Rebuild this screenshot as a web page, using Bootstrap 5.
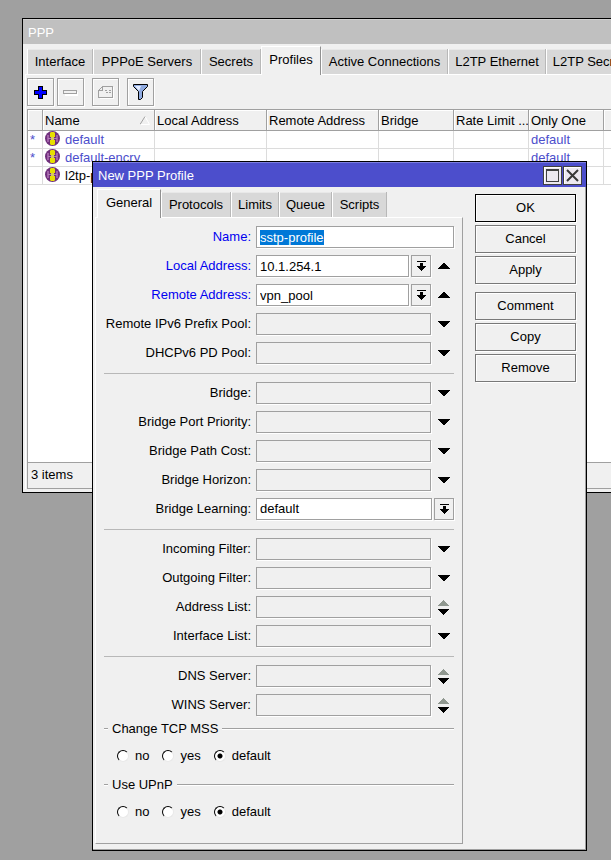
<!DOCTYPE html>
<html lang="en">
<head>
<meta charset="utf-8">
<meta name="viewport" content="width=device-width, initial-scale=1">
<title>PPP</title>
<link rel="stylesheet" href="https://cdn.jsdelivr.net/npm/bootstrap@5.3.0/dist/css/bootstrap.min.css">
<style>
body { background: #a0a0a0; color: #000; font: 13px/18px "Liberation Sans", Arial, sans-serif; }
button, input, select { font: inherit; color: inherit; }
.win { background: #f0f0f0; border: 1px solid #000; }
.win-ppp { left: 22px; right: -20px; top: 18px; height: 475px; padding-bottom: 3px; }
.win-dlg { left: 92px; top: 161px; width: 495px; padding-bottom: 6px; box-shadow: inset -1px -1px #a0a0a0; }
.win-title { height: 25px; line-height: 20px; background: #c0c0c0; color: #fff; padding: 4px 4px 0 5px; box-shadow: inset 0 1px #d0d0d0; }
.win-dlg .win-title { background: #4c4ecc; box-shadow: inset 0 1px #7c7ee0; }
.win-btns { gap: 1px; }
.tbtn { width: 19px; height: 19px; background: #ece8f0; border: 1px solid #404040; box-shadow: inset 1px 1px #fff; }

.tabs { margin-left: 4px; height: 30px; }
.tabs button { height: 25px; padding: 0; border: 0; border-right: 1px solid #b8b8b8; border-left: 1px solid #fff; background: #d8d8d8; white-space: nowrap; flex: none; box-shadow: inset 0 1px #e8e8e8; }
.tabs button.on { height: 29px; padding-bottom: 2px; background: #f0f0f0; border-right-color: #909090; border-top: 1px solid #fff; margin-bottom: -1px; position: relative; box-shadow: none; }
.t60 { width: 60px; } .t66 { width: 66px; } .t108 { width: 108px; } .t127 { width: 127px; } .t98 { width: 98px; } .t92 { width: 92px; }
.t64 { width: 64px; } .t70 { width: 70px; } .t48 { width: 48px; } .t53 { width: 53px; } .t55 { width: 55px; }

.sheet { margin-left: 2px; border-top: 1px solid #fff; border-left: 1px solid #fff; }
.tools { margin: 3px 0 3px 1px; }
.tool { width: 27px; height: 28px; border: 1px solid #a0a0a0; background: #f0f0f0; box-shadow: inset 1px 1px #fff, 1px 1px #fff; }
.tool + .tool { margin-left: 8px; }
.tool:nth-child(2) { margin-left: 3px; }
.grid-box { margin-left: 1px; border: 1px solid #a0a0a0; background: #fff; }
.grid-box table { width: 606px; table-layout: fixed; border-collapse: separate; border-spacing: 0; }
.grid-box th { height: 21px; background: #f0f0f0; font-weight: 400; border-right: 1px solid #a0a0a0; border-bottom: 1px solid #a0a0a0; padding: 1px 0 0 2px; white-space: nowrap; overflow: hidden; box-shadow: inset 1px 1px #fff; }
.grid-box td { height: 18px; line-height: 17px; border-right: 1px solid #dcdcdc; border-bottom: 1px solid #dcdcdc; padding: 0 0 0 2px; white-space: nowrap; overflow: hidden; }
.grid-box .c-flag { width: 15px; } .grid-box .c-wide { width: 112px; } .grid-box .c-mid { width: 75px; }
.sys { color: #4c4ecc; }
.status { border-top: 1px solid #a0a0a0; background: #f0f0f0; height: 26px; padding: 3px; }

.pane { border-right: 1px solid #a0a0a0; border-bottom: 1px solid #a0a0a0; border-top: 1px solid #fff; border-left: 1px solid #fff; width: 368px; padding: 8px 8px 11px; margin-left: 2px; }
.fld { display: grid; grid-template-columns: 147px minmax(0, 1fr); column-gap: 5px; align-items: center; height: 22px; margin-bottom: 7px; }
.fld label { text-align: right; white-space: nowrap; }
.fld label.set { color: #0000f0; }
.fld input, .fld select { height: 22px; width: 0; min-width: 0; flex: 1; border: 1px solid #a0a0a0; border-radius: 0; background: #fff; padding: 0 3px; box-shadow: 1px 1px #fff; outline: 0; appearance: none; }
.fld input:disabled { background: #f0f0f0; }
.fld input::selection { background: #0078d7; color: #fff; }
.drop { width: 20px; height: 22px; flex: none; border: 1px solid #a0a0a0; background: #f0f0f0; padding: 0; box-shadow: 1px 1px #fff; margin-left: 2px; }
.tog { width: 23px; height: 22px; flex: none; padding: 0 0 0 3px; border: 0; background: none; }
.drop svg, .tog svg, .tool svg, .tbtn svg { display: block; margin: auto; }
.rule { border: 0; border-top: 1px solid #b8b8b8; opacity: 1; margin: 9px 0 8px; }
.set-box { height: 56px; }
.set-box legend { float: none; display: flex; align-items: center; gap: 4px; font-size: 13px; line-height: 18px; margin: 0 0 9px; }
.set-box legend::before, .set-box legend::after { content: ""; height: 2px; border-top: 1px solid #a0a0a0; background: #fff; width: 4px; }
.set-box legend::after { flex: 1; }
.opts { padding-left: 13px; gap: 13px; }
.opts label { display: flex; align-items: center; gap: 6px; }
.opts input { appearance: none; width: 12px; height: 12px; margin: 0; border-radius: 50%; background: #fff; border: 1px solid; border-color: #000 #e8e8e8 #e8e8e8 #000; }
.opts input:checked { background: radial-gradient(circle, #000 2px, #fff 3px); }
.act { width: 101px; height: 28px; border: 1px solid #787878; background: #f0f0f0; padding: 0; box-shadow: inset 1px 1px #fff, 1px 1px #fff; }
.act.main-act { border-color: #000; }
.act-group { display: flex; flex-direction: column; gap: 3px; }
.acts { margin: 7px 0 0 12px; display: flex; flex-direction: column; gap: 8px; }
</style>
<script src="https://cdn.jsdelivr.net/npm/bootstrap@5.3.0/dist/js/bootstrap.bundle.min.js"></script>
</head>
<body class="vh-100 overflow-hidden position-relative">
<svg width="0" height="0" class="position-absolute" aria-hidden="true" shape-rendering="crispEdges">
  <symbol id="dn" viewBox="0 0 12 6"><path d="M0 0h12v1h-1v1h-1v1H9v1H8v1H7v1H5V5H4V4H3V3H2V2H1V1H0z"/></symbol>
  <symbol id="up" viewBox="0 0 12 6"><path d="M0 6h12V5h-1V4h-1V3H9V2H8V1H7V0H5v1H4v1H3v1H2v1H1v1H0z"/></symbol>
  <symbol id="pick" viewBox="0 0 9 10"><path d="M0 0h9v1H0zM3 2h3v3h3v1H8v1H7v1H6v1H5v1H4V9H3V8H2V7H1V6H0V5h3z"/></symbol>
  <symbol id="both" viewBox="0 0 12 15"><path fill="#909890" d="M0 6h11V5h-1V4H9V3H8V2H7V1H6V0H5v1H4v1H3v1H2v1H1v1H0z"/><path d="M0 9h11v1h-1v1H9v1H8v1H7v1H6v1H5v-1H4v-1H3v-1H2v-1H1v-1H0z"/></symbol>
  <symbol id="prof" viewBox="0 0 16 16" shape-rendering="auto"><circle cx="7.500" cy="7.500" r="7.500" fill="#70307c"/><path fill="#a060a8" d="M2 4h2v7H2zM11 4h2v7h-2z"/><path fill="#e8e000" d="M6 1h3l1 1v4H5V2zM5 9h5v4l-1 1H6l-1-1z"/><path fill="#b080b8" d="M3 7h9v1H3z"/><path fill="#d8c860" d="M6 6h3v3H6z"/></symbol>
</svg>

<section class="win win-ppp position-absolute d-flex flex-column">
  <div class="win-title flex-shrink-0">PPP</div>
  <div class="tabs d-flex align-items-end flex-shrink-0">
    <button class="t66">Interface</button><button class="t108">PPPoE Servers</button><button class="t60">Secrets</button><button class="on t60">Profiles</button><button class="t127">Active Connections</button><button class="t98">L2TP Ethernet</button><button class="t92">L2TP Secrets</button>
  </div>
  <div class="sheet flex-fill d-flex flex-column">
    <div class="tools d-flex flex-shrink-0">
      <button class="tool p-0" aria-label="Add"><svg width="15" height="15" shape-rendering="crispEdges"><path d="M5 1h5v4h4v5h-4v4H5v-4H1V5h4z"/><path fill="#0000ff" d="M6 2h3v4h4v3H9v4H6V9H2V6h4z"/></svg></button>
      <button class="tool p-0" aria-label="Remove"><svg width="15" height="15" shape-rendering="crispEdges"><path fill="#fff" d="M2 7h13v4H2z"/><path fill="#f0f0f0" stroke="#a0a0a0" d="M.5 5.500h13v3H.5z"/></svg></button>
      <button class="tool p-0" aria-label="Comment"><svg width="16" height="14" fill="none" stroke="#a0a0a0" shape-rendering="crispEdges"><path stroke="#fff" d="M15.500 2v11.500H2"/><path d="M4.500 1.500h10v11H.5v-7zM4.500 1.500v4H1M7 5.500h2M11 5.500h2M8 7.500h2M11 7.500h2"/></svg></button>
      <button class="tool p-0" aria-label="Filter"><svg width="15" height="16"><path fill="#8faae0" stroke="#000" d="M.5.5h14v2l-5 5v6l-2 2h-2v-8l-5-5z"/><path fill="#e4edff" d="M2 2h6L6 7z"/></svg></button>
    </div>
    <div class="grid-box flex-fill d-flex flex-column">
      <div class="flex-fill">
        <table>
          <colgroup><col class="c-flag"><col class="c-wide"><col class="c-wide"><col class="c-wide"><col class="c-mid"><col class="c-mid"><col class="c-mid"><col></colgroup>
          <thead><tr><th></th><th><span class="d-flex align-items-center justify-content-between">Name<svg class="me-1" width="10" height="9"><path d="M0 8.500h9.500L5 .5" fill="none" stroke="#fff"/><path d="M0 8.500L5 .5" stroke="#a0a0a0"/></svg></span></th><th>Local Address</th><th>Remote Address</th><th>Bridge</th><th>Rate Limit ...</th><th>Only One</th><th></th></tr></thead>
          <tbody>
            <tr class="sys"><td>*</td><td><span class="d-flex gap-1"><svg width="16" height="16"><use href="#prof"/></svg>default</span></td><td></td><td></td><td></td><td></td><td>default</td><td></td></tr>
            <tr class="sys"><td>*</td><td><span class="d-flex gap-1"><svg width="16" height="16"><use href="#prof"/></svg>default-encry</span></td><td></td><td></td><td></td><td></td><td>default</td><td></td></tr>
            <tr><td></td><td><span class="d-flex gap-1"><svg width="16" height="16"><use href="#prof"/></svg>l2tp-profile</span></td><td></td><td></td><td></td><td></td><td></td><td></td></tr>
          </tbody>
        </table>
      </div>
      <div class="status">3 items</div>
    </div>
  </div>
</section>

<section class="win win-dlg position-absolute" role="dialog" aria-label="New PPP Profile">
  <div class="win-title d-flex"><span class="me-auto">New PPP Profile</span>
    <span class="win-btns d-flex"><button class="tbtn p-0" aria-label="Maximize"><svg width="13" height="13" shape-rendering="crispEdges"><path fill="none" stroke="#404040" d="M.5.5h12v12H.5zM0 1.500h13"/></svg></button><button class="tbtn p-0" aria-label="Close"><svg width="13" height="13"><path stroke="#383838" stroke-width="2" d="M1 1l11 11M12 1L1 12"/></svg></button></span>
  </div>
  <div class="d-flex align-items-start">
    <div>
      <div class="tabs d-flex align-items-end">
        <button class="on t64">General</button><button class="t70">Protocols</button><button class="t48">Limits</button><button class="t53">Queue</button><button class="t55">Scripts</button>
      </div>
      <form class="pane">
        <div class="fld"><label class="set" for="f1">Name:</label><div class="d-flex"><input id="f1" value="sstp-profile"></div></div>
        <div class="fld"><label class="set" for="f2">Local Address:</label><div class="d-flex"><input id="f2" value="10.1.254.1"><button type="button" class="drop" aria-label="Choose"><svg width="9" height="10"><use href="#pick"/></svg></button><button type="button" class="tog" aria-label="Collapse"><svg width="12" height="6"><use href="#up"/></svg></button></div></div>
        <div class="fld"><label class="set" for="f3">Remote Address:</label><div class="d-flex"><input id="f3" value="vpn_pool"><button type="button" class="drop" aria-label="Choose"><svg width="9" height="10"><use href="#pick"/></svg></button><button type="button" class="tog" aria-label="Collapse"><svg width="12" height="6"><use href="#up"/></svg></button></div></div>
        <div class="fld"><label for="f4">Remote IPv6 Prefix Pool:</label><div class="d-flex"><input id="f4" disabled><button type="button" class="tog" aria-label="Expand"><svg width="12" height="6"><use href="#dn"/></svg></button></div></div>
        <div class="fld"><label for="f5">DHCPv6 PD Pool:</label><div class="d-flex"><input id="f5" disabled><button type="button" class="tog" aria-label="Expand"><svg width="12" height="6"><use href="#dn"/></svg></button></div></div>
        <hr class="rule">
        <div class="fld"><label for="f6">Bridge:</label><div class="d-flex"><input id="f6" disabled><button type="button" class="tog" aria-label="Expand"><svg width="12" height="6"><use href="#dn"/></svg></button></div></div>
        <div class="fld"><label for="f7">Bridge Port Priority:</label><div class="d-flex"><input id="f7" disabled><button type="button" class="tog" aria-label="Expand"><svg width="12" height="6"><use href="#dn"/></svg></button></div></div>
        <div class="fld"><label for="f8">Bridge Path Cost:</label><div class="d-flex"><input id="f8" disabled><button type="button" class="tog" aria-label="Expand"><svg width="12" height="6"><use href="#dn"/></svg></button></div></div>
        <div class="fld"><label for="f9">Bridge Horizon:</label><div class="d-flex"><input id="f9" disabled><button type="button" class="tog" aria-label="Expand"><svg width="12" height="6"><use href="#dn"/></svg></button></div></div>
        <div class="fld"><label for="f10">Bridge Learning:</label><div class="d-flex"><select id="f10"><option>default</option><option>no</option><option>yes</option></select><button type="button" class="drop" aria-label="Choose"><svg width="9" height="10"><use href="#pick"/></svg></button></div></div>
        <hr class="rule">
        <div class="fld"><label for="f11">Incoming Filter:</label><div class="d-flex"><input id="f11" disabled><button type="button" class="tog" aria-label="Expand"><svg width="12" height="6"><use href="#dn"/></svg></button></div></div>
        <div class="fld"><label for="f12">Outgoing Filter:</label><div class="d-flex"><input id="f12" disabled><button type="button" class="tog" aria-label="Expand"><svg width="12" height="6"><use href="#dn"/></svg></button></div></div>
        <div class="fld"><label for="f13">Address List:</label><div class="d-flex"><input id="f13" disabled><button type="button" class="tog" aria-label="Add or remove"><svg width="12" height="15"><use href="#both"/></svg></button></div></div>
        <div class="fld"><label for="f14">Interface List:</label><div class="d-flex"><input id="f14" disabled><button type="button" class="tog" aria-label="Expand"><svg width="12" height="6"><use href="#dn"/></svg></button></div></div>
        <hr class="rule">
        <div class="fld"><label for="f15">DNS Server:</label><div class="d-flex"><input id="f15" disabled><button type="button" class="tog" aria-label="Add or remove"><svg width="12" height="15"><use href="#both"/></svg></button></div></div>
        <div class="fld mb-1"><label for="f16">WINS Server:</label><div class="d-flex"><input id="f16" disabled><button type="button" class="tog" aria-label="Add or remove"><svg width="12" height="15"><use href="#both"/></svg></button></div></div>
        <fieldset class="set-box"><legend>Change TCP MSS</legend><div class="opts d-flex"><label><input type="radio" name="mss">no</label><label><input type="radio" name="mss">yes</label><label><input type="radio" name="mss" checked>default</label></div></fieldset>
        <fieldset class="set-box"><legend>Use UPnP</legend><div class="opts d-flex"><label><input type="radio" name="upnp">no</label><label><input type="radio" name="upnp">yes</label><label><input type="radio" name="upnp" checked>default</label></div></fieldset>
      </form>
    </div>
    <div class="acts">
      <div class="act-group"><button class="act main-act">OK</button><button class="act">Cancel</button><button class="act">Apply</button></div>
      <div class="act-group"><button class="act">Comment</button><button class="act">Copy</button><button class="act">Remove</button></div>
    </div>
  </div>
</section>
<script>document.getElementById("f1").select();</script>
</body>
</html>
